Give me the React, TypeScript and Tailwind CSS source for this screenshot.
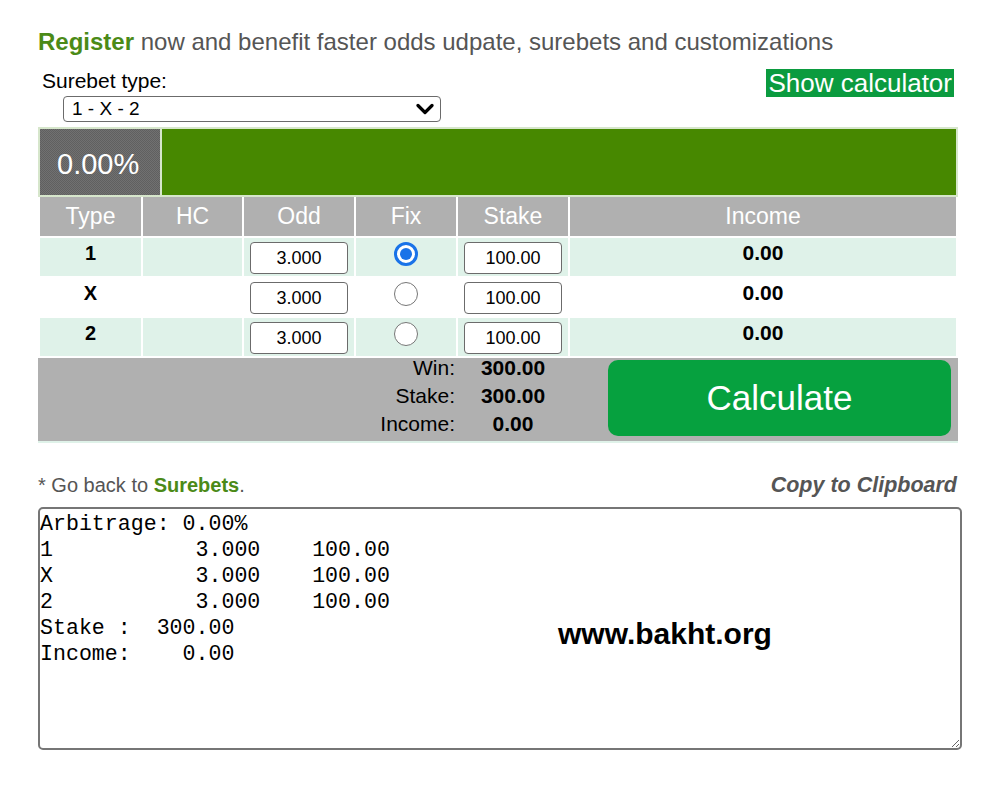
const cols = 'grid grid-cols-[101px_99px_110px_100px_110px_386px] gap-x-[2px]'

const rows = [
  { type: '1', odd: '3.000', stake: '100.00', fixed: true, bg: 'bg-[#dff2e9]' },
  { type: 'X', odd: '3.000', stake: '100.00', fixed: false, bg: 'bg-white' },
  { type: '2', odd: '3.000', stake: '100.00', fixed: false, bg: 'bg-[#dff2e9]' },
]

const output = `Arbitrage: 0.00%
1           3.000    100.00
X           3.000    100.00
2           3.000    100.00
Stake :  300.00
Income:    0.00`

function Radio({ checked }: { checked: boolean }) {
  if (checked) {
    return (
      <span className="flex h-[24px] w-[24px] items-center justify-center rounded-full border-[3px] border-[#1a73e8] bg-white">
        <span className="h-[12px] w-[12px] rounded-full bg-[#1a73e8]" />
      </span>
    )
  }
  return <span className="block h-[24px] w-[24px] rounded-full border-[1.5px] border-[#767676] bg-white" />
}

function Field({ value }: { value: string }) {
  return (
    <div className="mx-auto mt-[4px] flex h-[32px] w-[98px] items-center justify-center rounded-[4px] border-[1.5px] border-[#6b6b6b] bg-white text-[18px] text-black">
      {value}
    </div>
  )
}

export default function App() {
  return (
    <div className="min-h-[786px] w-[986px] bg-white pl-[38px] font-['Liberation_Sans',Arial,sans-serif]">
      {/* Banner */}
      <p className="pt-[28px] text-[24px] leading-[28px] text-[#555]">
        <span className="font-bold text-[#4b8a17]">Register</span> now and benefit faster odds udpate, surebets and customizations
      </p>

      {/* Type select + calculator toggle */}
      <div className="mt-[13px] flex w-[919px] items-start justify-between">
        <div>
          <p className="pl-[4px] text-[21px] leading-[24px] text-black">Surebet type:</p>
          <div className="ml-[25px] mt-[3px] flex h-[26px] w-[378px] items-center justify-between rounded-[4px] border-[1.5px] border-[#6b6b6b] bg-white pl-[8px] pr-[6px]">
            <span className="text-[19px] text-black">1 - X - 2</span>
            <svg width="18" height="14" viewBox="0 0 18 14" className="text-black">
              <path d="M2 3.5 L9 10.5 L16 3.5" fill="none" stroke="currentColor" strokeWidth="3.2" strokeLinecap="round" strokeLinejoin="round" />
            </svg>
          </div>
        </div>
        <div className="mr-[3px] h-[28px] bg-[#0b9b3f] px-[2px] text-[26px] leading-[28px] text-white">Show calculator</div>
      </div>

      {/* Calculator table */}
      <div className="mt-[5px] w-[920px]">
        <div className="flex h-[70px] gap-[2px] bg-[#d6e6cb] p-[2px]">
          <div className="flex w-[120px] items-center bg-[#686868] bg-[repeating-conic-gradient(#606060_0_25%,#717171_0_50%)] bg-[length:2px_2px] pl-[17px] pt-[6px] text-[29px] text-white">
            0.00%
          </div>
          <div className="flex-1 bg-[#478800]" />
        </div>

        <div className="bg-white px-[2px]">
          <div className={`${cols} h-[39px]`}>
            {['Type', 'HC', 'Odd', 'Fix', 'Stake', 'Income'].map((h) => (
              <div key={h} className="flex items-center justify-center bg-[#b0b0b0] text-[23px] text-white">
                {h}
              </div>
            ))}
          </div>

          {rows.map((r) => (
            <div key={r.type} className={`${cols} mt-[2px] h-[38px]`}>
              <div className={`${r.bg} pt-[3px] text-center text-[20px] font-bold leading-[24px] text-black`}>{r.type}</div>
              <div className={r.bg} />
              <div className={r.bg}>
                <Field value={r.odd} />
              </div>
              <div className={`${r.bg} flex justify-center pt-[4px]`}>
                <Radio checked={r.fixed} />
              </div>
              <div className={r.bg}>
                <Field value={r.stake} />
              </div>
              <div className={`${r.bg} pt-[3px] text-center text-[21px] font-bold leading-[24px] text-black`}>0.00</div>
            </div>
          ))}
        </div>

        <div className={`${cols} mt-[2px] h-[85px] border-b-2 border-[#dff2e9] bg-[#b0b0b0] px-[2px] text-[21px] leading-[28px] text-black`}>
          <div className="col-span-4 -mt-[4px] pr-[1px] text-right">
            <p>Win:</p>
            <p>Stake:</p>
            <p>Income:</p>
          </div>
          <div className="-mt-[4px] text-center font-bold">
            <p>300.00</p>
            <p>300.00</p>
            <p>0.00</p>
          </div>
          <div className="pl-[38px] pt-[2px]">
            <button className="flex h-[76px] w-[343px] items-center justify-center rounded-[10px] bg-[#06a13f] text-[35px] text-white">
              Calculate
            </button>
          </div>
        </div>
      </div>

      {/* Footer links */}
      <div className="mt-[29px] flex w-[919px] items-center justify-between leading-[26px]">
        <p className="text-[20px] text-[#555]">
          * Go back to <span className="font-bold text-[#4b8a17]">Surebets</span>.
        </p>
        <p className="text-[21.5px] font-bold italic text-[#555]">Copy to Clipboard</p>
      </div>

      {/* Output */}
      <div className="relative mt-[9px] w-[924px]">
        <textarea
          readOnly
          value={output}
          className="block h-[243px] w-[924px] rounded-[5px] border-2 border-[#767676] bg-white p-0 pt-[2px] font-['Liberation_Mono','Courier_New',monospace] text-[21.6px] leading-[26px] text-black outline-none"
        />
        <span className="pointer-events-none absolute left-[520px] top-[110px] text-[30px] font-bold leading-[34px] text-black">
          www.bakht.org
        </span>
      </div>
    </div>
  )
}
